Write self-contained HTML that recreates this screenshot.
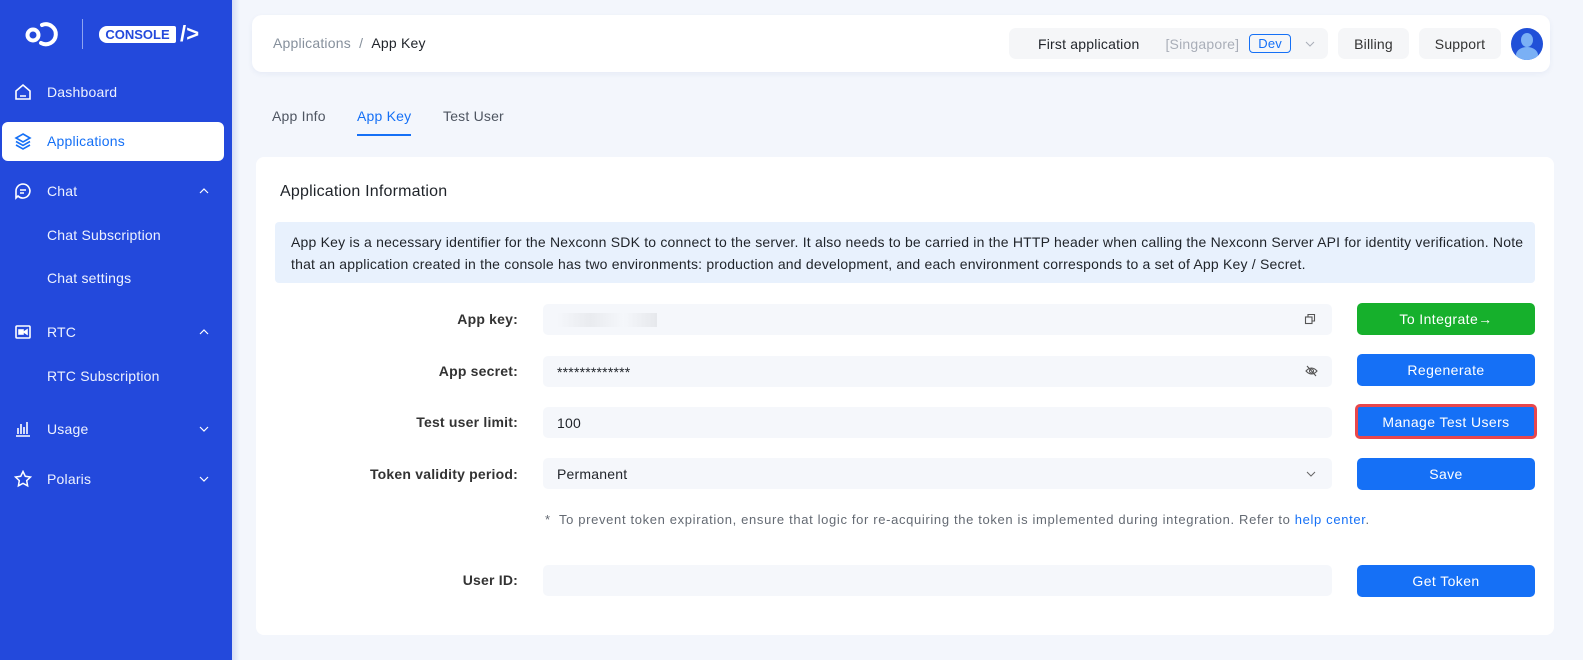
<!DOCTYPE html>
<html><head><meta charset="utf-8"><style>
*{box-sizing:border-box;margin:0;padding:0}
body{width:1583px;height:660px;overflow:hidden;background:#f3f6fc;font-family:"Liberation Sans",sans-serif;position:relative;color:#1f2329;letter-spacing:.2px}
.sb{position:absolute;left:0;top:0;width:232px;height:660px;background:#2349dc;color:#eef2ff;font-size:14px}
.sb .it{position:absolute;left:0;width:232px;height:40px;display:flex;align-items:center;padding-left:47px}
.sb svg.ic{position:absolute;left:14px}
.sb .car{position:absolute;left:198px;width:12px;height:12px}
.hdr{position:absolute;left:252px;top:15px;width:1298px;height:57px;background:#fff;border-radius:10px;box-shadow:0 2px 6px rgba(30,60,150,.06)}
.pill{position:absolute;top:13px;height:31px;background:#f5f6f8;border-radius:7px;font-size:14px;display:flex;align-items:center;justify-content:center;color:#333}
.tab{position:absolute;top:108px;font-size:14px;color:#4e5561}
.card{position:absolute;left:256px;top:157px;width:1298px;height:478px;background:#fff;border-radius:8px}
.lbl{position:absolute;right:1065px;font-size:14px;color:#333;font-weight:bold;text-align:right}
.inp{position:absolute;left:543px;width:789px;height:31px;background:#f5f7fb;border-radius:5px;font-size:14px;display:flex;align-items:center;padding-left:14px}
.btn{position:absolute;left:1357px;width:178px;height:32px;background:#1570f6;color:#fff;border-radius:5px;font-size:14px;display:flex;align-items:center;justify-content:center;letter-spacing:.4px}
</style></head><body>
<div class="sb">
 <svg style="position:absolute;left:24px;top:19px" width="44" height="30" viewBox="0 0 44 30"><circle cx="9" cy="16" r="5.5" fill="none" stroke="#fff" stroke-width="4"/><path d="M18 6 A10 10 0 1 1 17 24" fill="none" stroke="#fff" stroke-width="4" stroke-linecap="round"/></svg>
 <div style="position:absolute;left:82px;top:19px;width:1px;height:30px;background:#8ea4f0"></div>
 <div style="position:absolute;left:99px;top:26px;width:77px;height:17px;background:#fff;border-radius:8px 2px 2px 8px;color:#2349dc;font-weight:bold;font-size:13px;line-height:17px;text-align:center;letter-spacing:0">CONSOLE</div>
 <div style="position:absolute;left:180px;top:20px;color:#fff;font-weight:bold;font-size:22px;line-height:28px">/&gt;</div>
 <div class="it" style="top:72px"><svg class="ic" width="18" height="18" viewBox="0 0 18 18" fill="none" stroke="#fff" stroke-width="1.6"><path d="M2 8 L9 2 L16 8 V16 H2 Z M6 13 H12"/></svg>Dashboard</div>
 <div style="position:absolute;left:2px;top:122px;width:222px;height:39px;background:#fff;border-radius:6px"></div>
 <div class="it" style="top:121px;color:#1570f6"><svg class="ic" width="18" height="18" viewBox="0 0 18 18" fill="none" stroke="#1570f6" stroke-width="1.6"><path d="M9 2 L16 6 L9 10 L2 6 Z M2 9.5 L9 13.5 L16 9.5 M2 13 L9 17 L16 13"/></svg>Applications</div>
 <div class="it" style="top:171px"><svg class="ic" width="18" height="18" viewBox="0 0 18 18" fill="none" stroke="#fff" stroke-width="1.6"><path d="M9 2 A7 7 0 1 1 4 14 L2 16 V9 A7 7 0 0 1 9 2 Z M6 8 H12 M6 11 H10"/></svg>Chat<svg class="car" style="top:14px" viewBox="0 0 12 12" fill="none" stroke="#fff" stroke-width="1.2"><path d="M2 8 L6 4 L10 8"/></svg></div>
 <div class="it" style="top:215px">Chat Subscription</div>
 <div class="it" style="top:258px">Chat settings</div>
 <div class="it" style="top:312px"><svg class="ic" width="18" height="18" viewBox="0 0 18 18" fill="none" stroke="#fff" stroke-width="1.6"><rect x="2" y="3" width="14" height="12" rx="1"/><rect x="5" y="7" width="4" height="4" fill="#fff"/><path d="M10 9 L13 7 V11 Z" fill="#fff"/></svg>RTC<svg class="car" style="top:14px" viewBox="0 0 12 12" fill="none" stroke="#fff" stroke-width="1.2"><path d="M2 8 L6 4 L10 8"/></svg></div>
 <div class="it" style="top:356px">RTC Subscription</div>
 <div class="it" style="top:409px"><svg class="ic" width="18" height="18" viewBox="0 0 18 18" fill="none" stroke="#fff" stroke-width="1.6"><path d="M2 16 H16 M4 14 V8 M7 14 V4 M10 14 V7 M13 14 V2"/></svg>Usage<svg class="car" style="top:14px" viewBox="0 0 12 12" fill="none" stroke="#fff" stroke-width="1.2"><path d="M2 4 L6 8 L10 4"/></svg></div>
 <div class="it" style="top:459px"><svg class="ic" width="18" height="18" viewBox="0 0 18 18" fill="none" stroke="#fff" stroke-width="1.5"><path d="M9 1.5 L11.3 6.3 L16.5 7 L12.7 10.6 L13.6 15.8 L9 13.3 L4.4 15.8 L5.3 10.6 L1.5 7 L6.7 6.3 Z"/></svg>Polaris<svg class="car" style="top:14px" viewBox="0 0 12 12" fill="none" stroke="#fff" stroke-width="1.2"><path d="M2 4 L6 8 L10 4"/></svg></div>
</div>
<div style="position:absolute;left:232px;top:0;width:8px;height:660px;background:linear-gradient(90deg,#d6dcf5,#f3f6fc)"></div>

<div class="hdr">
 <div style="position:absolute;left:21px;top:20px;font-size:14px;color:#86909c">Applications&nbsp;&nbsp;/&nbsp;&nbsp;<span style="color:#1f2329">App Key</span></div>
 <div class="pill" style="left:757px;width:319px;justify-content:flex-start">
  <span style="margin-left:29px;color:#1f2329">First application</span>
  <span style="margin-left:26px;color:#a9aeb8">[Singapore]</span>
  <span style="margin-left:10px;border:1px solid #1570f6;color:#1570f6;border-radius:4px;font-size:13px;padding:1px 8px">Dev</span>
  <svg style="margin-left:14px" width="10" height="8" viewBox="0 0 10 8" fill="none" stroke="#a9aeb8"><path d="M1 2 L5 6 L9 2"/></svg>
 </div>
 <div class="pill" style="left:1086px;width:71px">Billing</div>
 <div class="pill" style="left:1167px;width:82px">Support</div>
 <div style="position:absolute;left:1259px;top:13px;width:32px;height:32px;border-radius:50%;background:#2050d8;overflow:hidden"><div style="position:absolute;left:10px;top:5px;width:12px;height:14px;border-radius:50%;background:#7ab0f5"></div><div style="position:absolute;left:5px;top:19px;width:22px;height:16px;border-radius:50%;background:#7ab0f5"></div></div>
</div>

<div class="tab" style="left:272px">App Info</div>
<div class="tab" style="left:357px;color:#1570f6">App Key</div>
<div style="position:absolute;left:357px;top:134px;width:54px;height:2px;background:#1570f6"></div>
<div class="tab" style="left:443px">Test User</div>

<div class="card"></div>
<div style="position:absolute;left:280px;top:183px;font-size:16px;color:#1f2329">Application Information</div>
<div style="position:absolute;left:275px;top:222px;width:1260px;height:61px;background:#e8f1fd;border-radius:4px;font-size:14px;line-height:22px;color:#1f2329;padding:9px 16px;letter-spacing:.2px;white-space:nowrap;overflow:hidden">App Key is a necessary identifier for the Nexconn SDK to connect to the server. It also needs to be carried in the HTTP header when calling the Nexconn Server API for identity verification. Note<br>that an application created in the console has two environments: production and development, and each environment corresponds to a set of App Key / Secret.</div>

<div class="lbl" style="top:311px">App key:</div>
<div class="inp" style="top:304px"><div style="width:100px;height:14px;background:linear-gradient(90deg,#f5f7fb,#e9ebef,#f5f7fb,#e6e8ec)"></div><svg style="position:absolute;right:16px;top:9px" width="12" height="12" viewBox="0 0 12 12" fill="none" stroke="#555" stroke-width="1.1"><rect x="1.5" y="4" width="6.5" height="6.5"/><path d="M4 4 V1.5 H10.5 V8 H8"/></svg></div>
<div class="btn" style="top:303px;background:#16b02c">To Integrate→</div>

<div class="lbl" style="top:363px">App secret:</div>
<div class="inp" style="top:356px">*************<svg style="position:absolute;right:14px;top:9px" width="13" height="12" viewBox="0 0 13 12" fill="none" stroke="#555" stroke-width="1.1"><path d="M1 6 Q6.5 0 12 6 Q6.5 12 1 6 Z"/><circle cx="6.5" cy="6" r="2"/><path d="M2 1 L11 11"/></svg></div>
<div class="btn" style="top:354px">Regenerate</div>

<div class="lbl" style="top:414px">Test user limit:</div>
<div class="inp" style="top:407px">100</div>
<div class="btn" style="top:404px;left:1355px;width:182px;height:35px;border:3px solid #e8474c">Manage Test Users</div>

<div class="lbl" style="top:466px">Token validity period:</div>
<div class="inp" style="top:458px">Permanent<svg style="position:absolute;right:16px;top:12px" width="10" height="8" viewBox="0 0 10 8" fill="none" stroke="#666"><path d="M1 2 L5 6 L9 2"/></svg></div>
<div class="btn" style="top:458px">Save</div>

<div style="position:absolute;left:545px;top:512px;font-size:13px;color:#646a73;letter-spacing:.65px">*&nbsp; To prevent token expiration, ensure that logic for re-acquiring the token is implemented during integration. Refer to <span style="color:#1570f6">help center</span>.</div>

<div class="lbl" style="top:572px">User ID:</div>
<div class="inp" style="top:565px"></div>
<div class="btn" style="top:565px">Get Token</div>
</body></html>
